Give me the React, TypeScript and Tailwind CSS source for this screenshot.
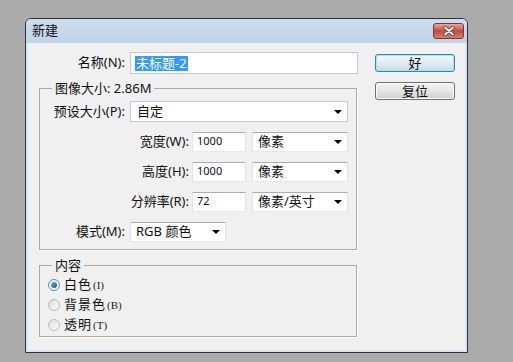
import React from 'react'

const font = "font-['Noto_Sans','Noto_Sans_CJK_SC',sans-serif]"

const Arrow: React.FC = () => (
  <span className="ml-auto mr-[5px] h-0 w-0 border-x-[4px] border-t-[4px] border-x-transparent border-t-black" />
)

const Select: React.FC<{ text: string; w: string; h?: string }> = ({ text, w, h = 'h-[20px]' }) => (
  <div className={`${w} ${h} flex items-center bg-white border border-t-[#abadb3] border-x-[#dfe3e8] border-b-[#e3e9ef] pl-[5px] text-[13px]`}>
    <span className="whitespace-nowrap">{text}</span>
    <Arrow />
  </div>
)

const NumInput: React.FC<{ value: string }> = ({ value }) => (
  <div className="w-[54px] h-[20px] bg-white border border-t-[#abadb3] border-x-[#dfe3e8] border-b-[#e3e9ef] pl-[4px] pt-[1px] text-[11px] leading-[14px]">
    {value}
  </div>
)

const Radio: React.FC<{ checked?: boolean; label: string; key2: string }> = ({ checked, label, key2 }) => (
  <div className="h-[20px] flex items-center pl-[8px]">
    {checked ? (
      <span className="w-[12px] h-[12px] rounded-full border border-[#5b8fb9] bg-[#eef4fa] flex items-center justify-center">
        <span className="w-[6px] h-[6px] rounded-full bg-gradient-to-br from-[#7cc0f2] to-[#0f4c86]" />
      </span>
    ) : (
      <span className="w-[12px] h-[12px] rounded-full border border-[#bdbdbd] bg-gradient-to-br from-[#dedede] to-[#fafafa]" />
    )}
    <span className="ml-[4px] text-[13px] tracking-[1px]">{label}</span>
    <span className="ml-[1px] text-[11px] font-['Liberation_Serif',serif] text-[#222]">({key2})</span>
  </div>
)

export default function App() {
  return (
    <div className={`w-[513px] min-h-[362px] bg-[#ababab] pt-[18px] pl-[25px] text-[#111] ${font}`}>
      <div className="w-[443px] h-[335px] rounded-t-[6px] border border-[#27323d] bg-[#dbe7f3] flex flex-col">
        {/* title bar */}
        <div className="h-[24px] flex items-center rounded-t-[5px] bg-gradient-to-b from-[#cfdeef] to-[#c0d3e9]">
          <span className="ml-[6px] text-[13px]">新建</span>
          <div className="ml-auto mr-[3px] w-[31px] h-[16px] rounded-[3px] border border-[#7a3a33] bg-gradient-to-b from-[#e9a99b] via-[#c7473a] to-[#d77c6b] flex items-center justify-center">
            <svg width="12" height="10" viewBox="0 0 12 10">
              <path d="M2 1.5 L10 8.5 M10 1.5 L2 8.5" stroke="#6b2a24" strokeWidth="3.4" strokeLinecap="round" />
              <path d="M2 1.5 L10 8.5 M10 1.5 L2 8.5" stroke="#ffffff" strokeWidth="2" strokeLinecap="round" />
            </svg>
          </div>
        </div>

        {/* body */}
        <div className="flex-1 mx-[2px] mb-[2px] bg-[#f0f0f0] flex">
          <div className="w-[330px] pt-[9px]">
            <div className="flex items-center">
              <span className="w-[97px] shrink-0 whitespace-nowrap text-right text-[13px]">名称(N):</span>
              <div className="ml-[5px] w-[228px] h-[22px] bg-white border border-[#bccbdb] pl-[4px] flex items-center">
                <span className="bg-[#3399ff] text-white text-[13px] leading-[15px] px-[1px]">未标题-2</span>
              </div>
            </div>

            <fieldset className="ml-[11px] mt-[6px] w-[318px] border border-[#a9a9a9] shadow-[1px_1px_0_#fff] pt-[5px] pb-[7px]">
              <legend className="ml-[12px] px-[3px] text-[13px] leading-[16px]">图像大小: 2.86M</legend>
              <div className="flex items-center h-[21px]">
                <span className="w-[85px] shrink-0 whitespace-nowrap text-right text-[13px]">预设大小(P):</span>
                <div className="ml-[5px]">
                  <div className="w-[218px] h-[21px] flex items-center bg-white border border-[#bccbdb] pl-[6px] text-[13px]">
                    <span>自定</span>
                    <Arrow />
                  </div>
                </div>
              </div>
              {[
                ['宽度(W):', '1000', '像素'],
                ['高度(H):', '1000', '像素'],
                ['分辨率(R):', '72', '像素/英寸'],
              ].map(([label, value, unit]) => (
                <div key={label} className="flex items-center h-[20px] mt-[10px]">
                  <span className="w-[149px] shrink-0 whitespace-nowrap text-right text-[13px]">{label}</span>
                  <div className="ml-[3px]">
                    <NumInput value={value} />
                  </div>
                  <div className="ml-[6px]">
                    <Select text={unit} w="w-[96px]" />
                  </div>
                </div>
              ))}
              <div className="flex items-center h-[20px] mt-[10px]">
                <span className="w-[85px] shrink-0 whitespace-nowrap text-right text-[13px]">模式(M):</span>
                <div className="ml-[5px]">
                  <Select text="RGB 颜色" w="w-[96px]" />
                </div>
              </div>
            </fieldset>

            <fieldset className="ml-[11px] mt-[7px] w-[318px] border border-[#a9a9a9] shadow-[1px_1px_0_#fff] pt-[2px] pb-[1px]">
              <legend className="ml-[12px] px-[3px] text-[13px] leading-[16px]">内容</legend>
              <Radio checked label="白色" key2="I" />
              <Radio label="背景色" key2="B" />
              <Radio label="透明" key2="T" />
            </fieldset>
          </div>

          <div className="ml-[17px] pt-[11px] flex flex-col gap-[10px]">
            <button className="w-[80px] h-[18px] rounded-[3px] border border-[#3c7fb1] shadow-[inset_0_0_0_1px_#a6e4f8] bg-gradient-to-b from-[#f0f6f9] via-[#e2ecf1] to-[#c8dbe4] text-[13px] leading-[14px]">
              好
            </button>
            <button className="w-[80px] h-[18px] rounded-[3px] border border-[#707070] shadow-[inset_0_0_0_1px_#fcfcfc] bg-gradient-to-b from-[#f2f2f2] via-[#e6e6e6] to-[#cfcfcf] text-[13px] leading-[14px]">
              复位
            </button>
          </div>
        </div>
      </div>
    </div>
  )
}
